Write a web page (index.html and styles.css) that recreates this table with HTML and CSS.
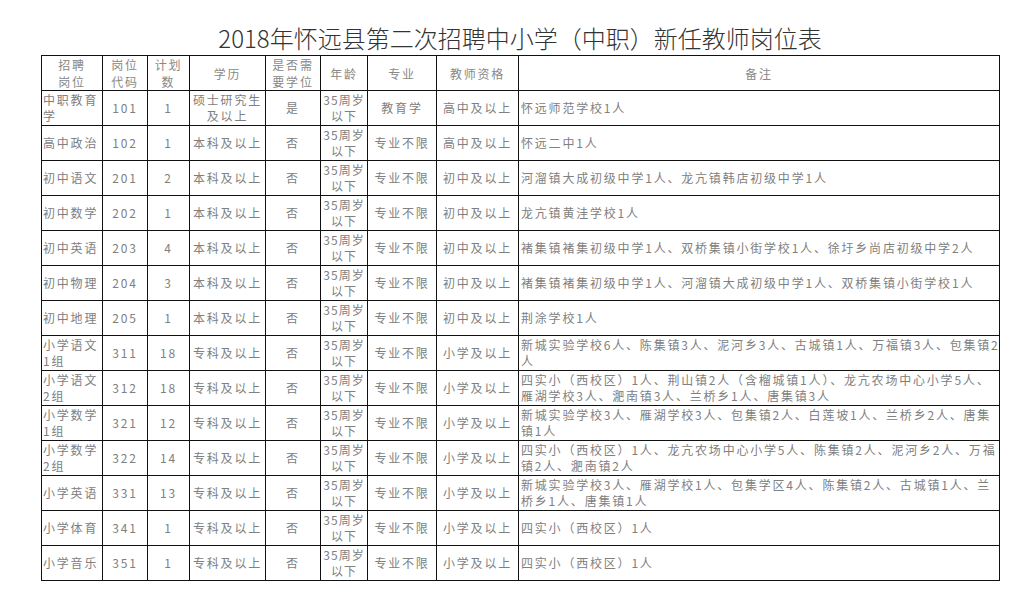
FILE: index.html
```html
<!DOCTYPE html>
<html lang="zh-CN">
<head>
<meta charset="utf-8">
<title>2018年怀远县第二次招聘中小学（中职）新任教师岗位表</title>
<link rel="stylesheet" href="styles.css">
</head>
<body>
<div class="page">
  <h1 class="title">2018年怀远县第二次招聘中小学（中职）新任教师岗位表</h1>
  <table class="jobs">
    <colgroup>
      <col class="c1"><col class="c2"><col class="c3"><col class="c4"><col class="c5">
      <col class="c6"><col class="c7"><col class="c8"><col class="c9">
    </colgroup>
    <thead>
      <tr>
        <th>招聘<br>岗位</th><th>岗位<br>代码</th><th>计划<br>数</th><th>学历</th><th>是否需<br>要学位</th>
        <th>年龄</th><th>专业</th><th>教师资格</th><th>备注</th>
      </tr>
    </thead>
    <tbody>
      <tr><td class="l">中职教育<br>学</td><td>101</td><td>1</td><td>硕士研究生<br>及以上</td><td>是</td><td class="age">35周岁<br>以下</td><td>教育学</td><td>高中及以上</td><td class="r">怀远师范学校1人</td></tr>
      <tr><td class="l">高中政治</td><td>102</td><td>1</td><td>本科及以上</td><td>否</td><td class="age">35周岁<br>以下</td><td>专业不限</td><td>高中及以上</td><td class="r">怀远二中1人</td></tr>
      <tr><td class="l">初中语文</td><td>201</td><td>2</td><td>本科及以上</td><td>否</td><td class="age">35周岁<br>以下</td><td>专业不限</td><td>初中及以上</td><td class="r">河溜镇大成初级中学1人、龙亢镇韩店初级中学1人</td></tr>
      <tr><td class="l">初中数学</td><td>202</td><td>1</td><td>本科及以上</td><td>否</td><td class="age">35周岁<br>以下</td><td>专业不限</td><td>初中及以上</td><td class="r">龙亢镇黄洼学校1人</td></tr>
      <tr><td class="l">初中英语</td><td>203</td><td>4</td><td>本科及以上</td><td>否</td><td class="age">35周岁<br>以下</td><td>专业不限</td><td>初中及以上</td><td class="r">褚集镇褚集初级中学1人、双桥集镇小街学校1人、徐圩乡尚店初级中学2人</td></tr>
      <tr><td class="l">初中物理</td><td>204</td><td>3</td><td>本科及以上</td><td>否</td><td class="age">35周岁<br>以下</td><td>专业不限</td><td>初中及以上</td><td class="r">褚集镇褚集初级中学1人、河溜镇大成初级中学1人、双桥集镇小街学校1人</td></tr>
      <tr><td class="l">初中地理</td><td>205</td><td>1</td><td>本科及以上</td><td>否</td><td class="age">35周岁<br>以下</td><td>专业不限</td><td>初中及以上</td><td class="r">荆涂学校1人</td></tr>
      <tr><td class="l">小学语文<br>1组</td><td>311</td><td>18</td><td>专科及以上</td><td>否</td><td class="age">35周岁<br>以下</td><td>专业不限</td><td>小学及以上</td><td class="r">新城实验学校6人、陈集镇3人、泥河乡3人、古城镇1人、万福镇3人、包集镇2<br>人</td></tr>
      <tr><td class="l">小学语文<br>2组</td><td>312</td><td>18</td><td>专科及以上</td><td>否</td><td class="age">35周岁<br>以下</td><td>专业不限</td><td>小学及以上</td><td class="r">四实小（西校区）1人、荆山镇2人（含榴城镇1人）、龙亢农场中心小学5人、<br>雁湖学校3人、淝南镇3人、兰桥乡1人、唐集镇3人</td></tr>
      <tr><td class="l">小学数学<br>1组</td><td>321</td><td>12</td><td>专科及以上</td><td>否</td><td class="age">35周岁<br>以下</td><td>专业不限</td><td>小学及以上</td><td class="r">新城实验学校3人、雁湖学校3人、包集镇2人、白莲坡1人、兰桥乡2人、唐集<br>镇1人</td></tr>
      <tr><td class="l">小学数学<br>2组</td><td>322</td><td>14</td><td>专科及以上</td><td>否</td><td class="age">35周岁<br>以下</td><td>专业不限</td><td>小学及以上</td><td class="r">四实小（西校区）1人、龙亢农场中心小学5人、陈集镇2人、泥河乡2人、万福<br>镇2人、淝南镇2人</td></tr>
      <tr><td class="l">小学英语</td><td>331</td><td>13</td><td>专科及以上</td><td>否</td><td class="age">35周岁<br>以下</td><td>专业不限</td><td>小学及以上</td><td class="r">新城实验学校3人、雁湖学校1人、包集学区4人、陈集镇2人、古城镇1人、兰<br>桥乡1人、唐集镇1人</td></tr>
      <tr><td class="l">小学体育</td><td>341</td><td>1</td><td>专科及以上</td><td>否</td><td class="age">35周岁<br>以下</td><td>专业不限</td><td>小学及以上</td><td class="r">四实小（西校区）1人</td></tr>
      <tr><td class="l">小学音乐</td><td>351</td><td>1</td><td>专科及以上</td><td>否</td><td class="age">35周岁<br>以下</td><td>专业不限</td><td>小学及以上</td><td class="r">四实小（西校区）1人</td></tr>
    </tbody>
  </table>
</div>
</body>
</html>
```

FILE: styles.css
```css
html, body {
  margin: 0;
  padding: 0;
  background: #fff;
}

.page {
  padding: 22px 0 0 41px;
  font-family: "Noto Sans CJK SC", "Noto Sans", sans-serif;
}

.title {
  margin: 0 0 2px 0;
  width: 958px;
  text-align: center;
  font-size: 24px;
  line-height: 31px;
  font-weight: 300;
  color: #333;
  letter-spacing: 0;
}

.jobs {
  border-collapse: collapse;
  table-layout: fixed;
  width: 958px;
  font-size: 12px;
  letter-spacing: 1.8px;
  color: #808080;
}

.c1 { width: 61px; }
.c2 { width: 45px; }
.c3 { width: 42px; }
.c4 { width: 76px; }
.c5 { width: 55px; }
.c6 { width: 47px; }
.c7 { width: 69px; }
.c8 { width: 82px; }
.c9 { width: 481px; }

.jobs th,
.jobs td {
  border: 1px solid #111;
  padding: 0 2px;
  height: 34px;
  line-height: 16px;
  text-align: center;
  vertical-align: middle;
  font-weight: 400;
  white-space: nowrap;
  overflow: hidden;
}

.jobs th {
  color: #888;
  line-height: 17px;
}

.jobs td.l {
  text-align: left;
  padding-left: 1px;
}

.jobs td.r {
  text-align: left;
  padding-left: 2px;
}

.jobs td.age {
  padding: 0;
  letter-spacing: 1px;
}
```
